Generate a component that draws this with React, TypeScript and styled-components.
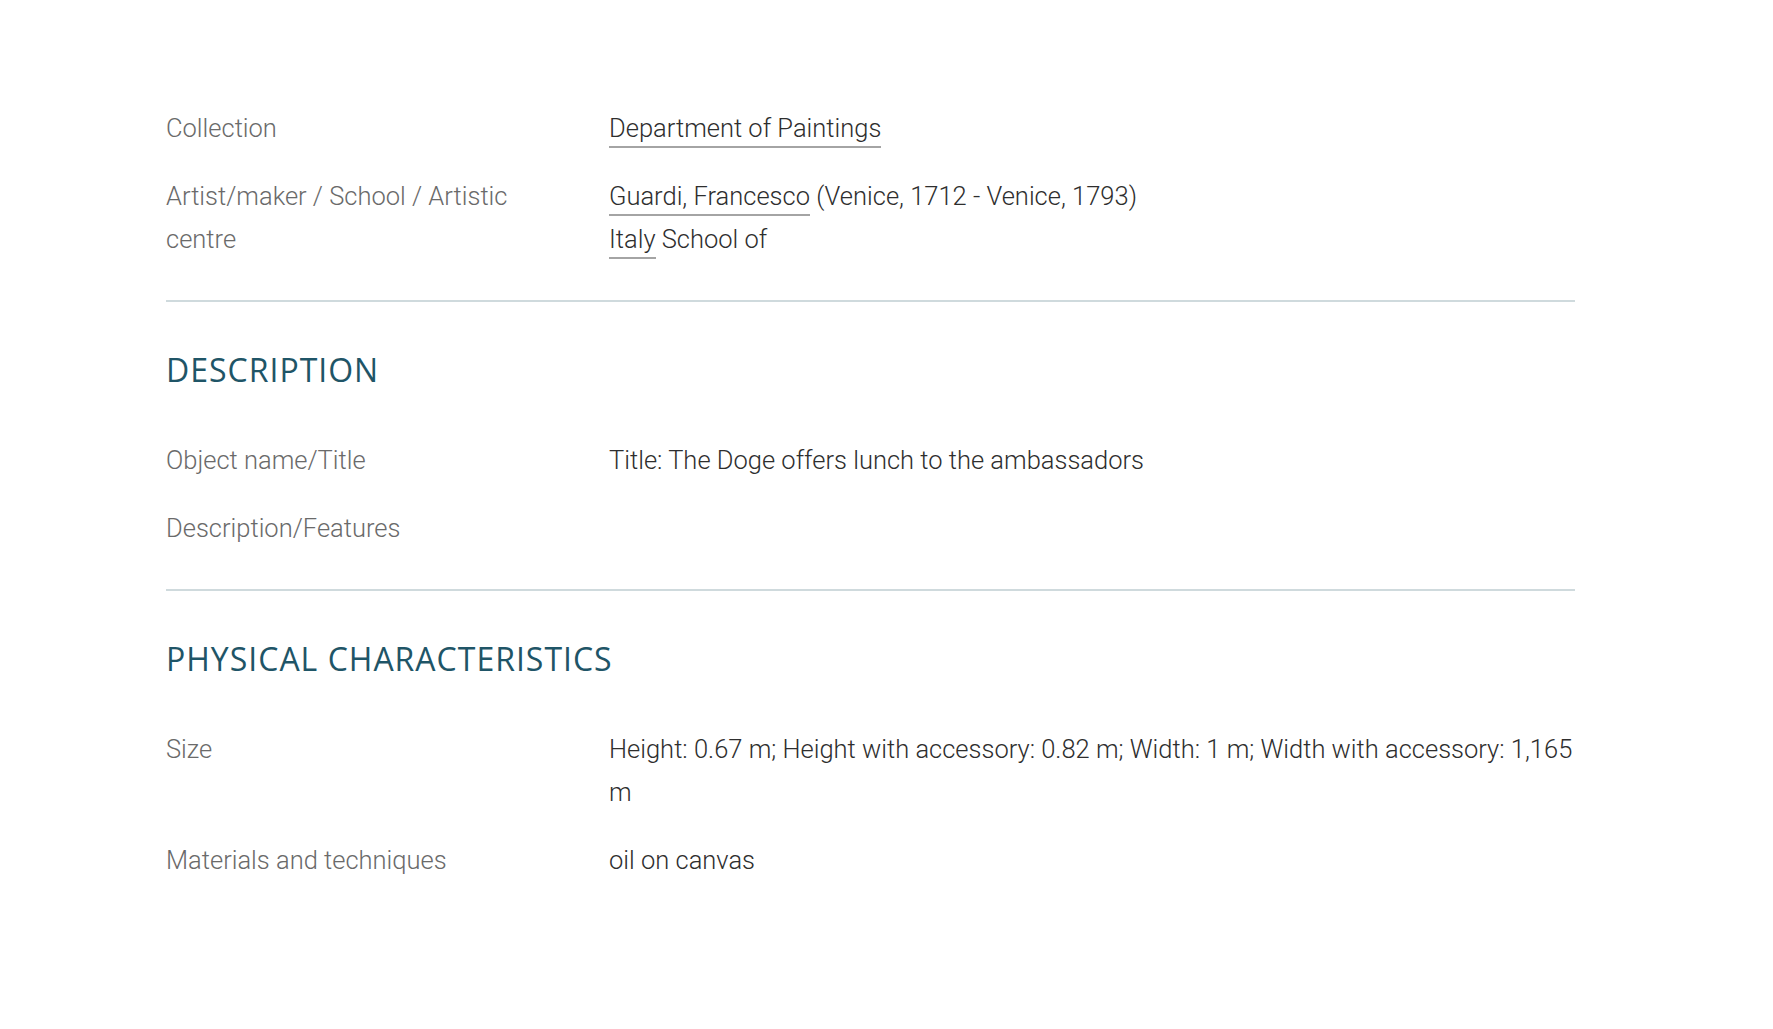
import styled, { createGlobalStyle } from "styled-components";

const GlobalStyle = createGlobalStyle`
  html, body {
    margin: 0;
    padding: 0;
    background: #ffffff;
  }
  body {
    font-family: Roboto, "Liberation Sans", sans-serif;
  }
`;

const Page = styled.div`
  padding: 107px 198px 120px 166px;
`;

const Section = styled.section`
  padding-bottom: 39px;
  border-bottom: 2px solid #cfdadd;
  &:last-child {
    border-bottom: none;
  }
  & + & {
    padding-top: 48px;
  }
`;

const SectionTitle = styled.h2`
  margin: 0 0 49px;
  font-family: "Open Sans", sans-serif;
  font-weight: 400;
  font-size: 32px;
  line-height: 40px;
  letter-spacing: 1px;
  color: #1f5567;
`;

const Rows = styled.dl`
  display: grid;
  grid-template-columns: 443px 1fr;
  row-gap: 25px;
  margin: 0;
`;

const Label = styled.dt`
  margin: 0;
  padding-right: 60px;
  font-weight: 300;
  font-size: 25.5px;
  line-height: 43px;
  color: #6a6a6a;
`;

const Value = styled.dd`
  margin: 0;
  font-weight: 300;
  font-size: 25.5px;
  line-height: 43px;
  color: #2e2e2e;
`;

const Line = styled.div``;

const Link = styled.a`
  color: #2e2e2e;
  text-decoration: none;
  padding-bottom: 3px;
  border-bottom: 2px solid #a4a4a4;
`;

export default function App() {
  return (
    <>
      <GlobalStyle />
      <Page>
        <Section>
          <Rows>
            <Label>Collection</Label>
            <Value>
              <Link href="#">Department of Paintings</Link>
            </Value>
            <Label>Artist/maker / School / Artistic centre</Label>
            <Value>
              <Line>
                <Link href="#">Guardi, Francesco</Link> (Venice, 1712 - Venice, 1793)
              </Line>
              <Line>
                <Link href="#">Italy</Link> School of
              </Line>
            </Value>
          </Rows>
        </Section>

        <Section>
          <SectionTitle>DESCRIPTION</SectionTitle>
          <Rows>
            <Label>Object name/Title</Label>
            <Value>Title: The Doge offers lunch to the ambassadors</Value>
            <Label>Description/Features</Label>
            <Value />
          </Rows>
        </Section>

        <Section>
          <SectionTitle>PHYSICAL CHARACTERISTICS</SectionTitle>
          <Rows>
            <Label>Size</Label>
            <Value>
              Height: 0.67 m; Height with accessory: 0.82 m; Width: 1 m; Width with accessory: 1,165 m
            </Value>
            <Label>Materials and techniques</Label>
            <Value>oil on canvas</Value>
          </Rows>
        </Section>
      </Page>
    </>
  );
}
